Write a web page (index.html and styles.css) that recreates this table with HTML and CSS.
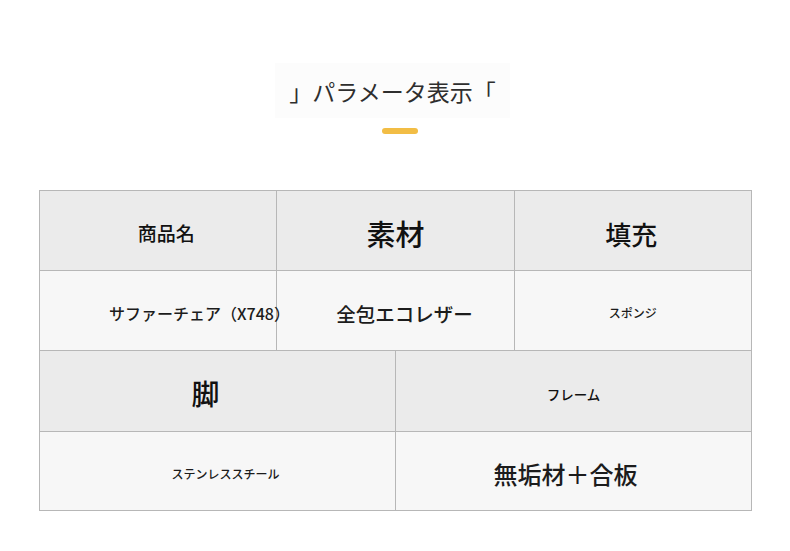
FILE: index.html
```html
<!DOCTYPE html>
<html lang="ja">
<head>
<meta charset="utf-8">
<title>パラメータ表示</title>
<link rel="stylesheet" href="styles.css">
</head>
<body>
<div class="page">
  <header class="heading">
    <h1 class="title">」パラメータ表示「</h1>
    <span class="accent"></span>
  </header>
  <div class="spec">
    <div class="cell head third name-h">商品名</div>
    <div class="cell head third mat-h">素材</div>
    <div class="cell head third fill-h">填充</div>
    <div class="cell val third name-v">サファーチェア（X748）</div>
    <div class="cell val third mat-v">全包エコレザー</div>
    <div class="cell val third fill-v">スポンジ</div>
    <div class="cell head half leg-h">脚</div>
    <div class="cell head half frame-h">フレーム</div>
    <div class="cell val half leg-v">ステンレススチール</div>
    <div class="cell val half frame-v">無垢材＋合板</div>
  </div>
</div>
</body>
</html>
```

FILE: styles.css
```css
* { box-sizing: border-box; }
html, body { margin: 0; padding: 0; background: #ffffff; }
body {
  font-family: "Noto Sans CJK JP", "Noto Sans", sans-serif;
  color: #222;
}
.page {
  width: 790px;
  padding-top: 63px;
}
.heading {
  display: flex;
  flex-direction: column;
  align-items: center;
}
.title {
  margin: 0 0 0 -5px;
  width: 235px;
  height: 55px;
  padding-top: 1px;
  background: #fcfcfc;
  font-size: 23px;
  font-weight: 400;
  line-height: 55px;
  color: #2e2e2e;
  text-align: center;
  white-space: nowrap;
}
.accent {
  display: block;
  width: 36px;
  height: 6px;
  margin: 10px 0 0 9px;
  border-radius: 3px;
  background: #f2bd45;
}
.spec {
  display: grid;
  grid-template-columns: repeat(6, 1fr);
  grid-template-rows: 80px 80px 81px 79px;
  width: 713px;
  margin: 56px 0 0 39px;
  border-top: 1px solid #b7b7b7;
  border-left: 1px solid #b7b7b7;
}
.cell {
  display: flex;
  align-items: center;
  justify-content: center;
  border-right: 1px solid #b7b7b7;
  border-bottom: 1px solid #b7b7b7;
  padding-top: 6px;
  white-space: nowrap;
  line-height: 1.2;
  font-weight: 500;
}
.third { grid-column: span 2; }
.half { grid-column: span 3; }
.head { background: #ebebeb; color: #111; }
.val { background: #f7f7f7; color: #1c1c1c; }

.name-h { font-size: 19px; padding-left: 16px; }
.mat-h { font-size: 29px; }
.fill-h { font-size: 26px; padding-right: 3px; }
.name-v { font-size: 16px; justify-content: flex-start; padding-left: 69px; z-index: 1; }
.mat-v { font-size: 19.5px; padding-left: 18px; }
.fill-v { font-size: 12px; }
.leg-h { font-size: 28px; padding-right: 24px; }
.frame-h { font-size: 13.5px; }
.leg-v { font-size: 12px; padding-left: 16px; }
.frame-v { font-size: 24px; padding-right: 16px; }
```
